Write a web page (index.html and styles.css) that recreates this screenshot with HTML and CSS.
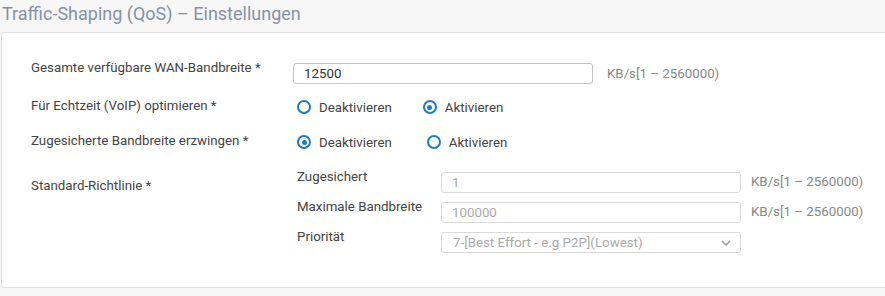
FILE: index.html
```html
<!DOCTYPE html>
<html lang="de">
<head>
<meta charset="utf-8">
<title>Traffic-Shaping (QoS) – Einstellungen</title>
<link rel="stylesheet" href="styles.css">
</head>
<body>
<h1 class="title">Traffic-Shaping (QoS) – Einstellungen</h1>
<section class="panel">
  <div class="row row-wan">
    <div class="label">Gesamte verfügbare WAN-Bandbreite *</div>
    <div class="field">
      <div class="input">12500</div>
      <span class="unit">KB/s[1 – 2560000)</span>
    </div>
  </div>
  <div class="row row-radio">
    <div class="label">Für Echtzeit (VoIP) optimieren *</div>
    <div class="radios">
      <span class="radio"><span class="dot"></span>Deaktivieren</span>
      <span class="radio"><span class="dot checked"></span>Aktivieren</span>
    </div>
  </div>
  <div class="row row-radio">
    <div class="label">Zugesicherte Bandbreite erzwingen *</div>
    <div class="radios wide">
      <span class="radio"><span class="dot checked"></span>Deaktivieren</span>
      <span class="radio"><span class="dot"></span>Aktivieren</span>
    </div>
  </div>
  <div class="row row-policy">
    <div class="label policy-label">Standard-Richtlinie *</div>
    <div class="subgrid">
      <div class="sublabel">Zugesichert</div>
      <div class="input disabled">1</div>
      <span class="unit">KB/s[1 – 2560000)</span>
      <div class="sublabel">Maximale Bandbreite</div>
      <div class="input disabled">100000</div>
      <span class="unit">KB/s[1 – 2560000)</span>
      <div class="sublabel">Priorität</div>
      <div class="input disabled select">7-[Best Effort - e.g P2P](Lowest)
        <svg class="chev" width="10" height="6" viewBox="0 0 10 6"><path d="M1 1l4 4 4-4" fill="none" stroke="#9aa0a6" stroke-width="1.6"/></svg>
      </div>
      <span></span>
    </div>
  </div>
</section>
</body>
</html>
```
FILE: styles.css
```css
* { box-sizing: border-box; }
html, body { margin: 0; padding: 0; }
body {
  background: #f7f7f7;
  font-family: Roboto, "Noto Sans", "Liberation Sans", sans-serif;
  font-size: 13.3px;
  color: #444;
  width: 885px;
  height: 296px;
  overflow: hidden;
}
.title {
  margin: 0;
  height: 32px;
  padding: 2px 0 0 2px;
  font-size: 18px;
  font-weight: 400;
  line-height: 24px;
  color: #8592a6;
}
.panel {
  margin-left: 1px;
  width: 900px;
  height: 256px;
  background: #fff;
  border: 1px solid #dcdcdc;
  border-radius: 3px;
  padding: 27px 0 0 29px;
}
.row {
  display: grid;
  grid-template-columns: 262px 1fr;
}
.label { line-height: 16px; }
.row-wan { height: 39px; }
.field { display: flex; align-items: center; height: 22px; margin-top: 2px; }
.input {
  width: 300px;
  height: 21px;
  border: 1px solid #c4c4c4;
  border-radius: 3px;
  padding: 0 10px;
  line-height: 19px;
  color: #333;
  background: #fff;
  position: relative;
}
.unit { color: #888; margin-left: 14px; white-space: nowrap; }
.row-radio { height: 35px; }
.row-radio .label { margin-top: -1px; }
.radios { display: flex; align-items: center; height: 16px; margin-top: 0; margin-left: 4px; }
.radio { display: flex; align-items: center; color: #444; margin-right: 31px; }
.radios.wide .radio:first-child { margin-right: 35px; }
.dot {
  width: 14px;
  height: 14px;
  border: 2px solid #1f7ac4;
  border-radius: 50%;
  margin-right: 8px;
  display: inline-flex;
  align-items: center;
  justify-content: center;
}
.dot.checked::after {
  content: "";
  width: 5px;
  height: 5px;
  border-radius: 50%;
  background: #1f7ac4;
}
.row-policy { grid-template-columns: 266px 1fr; padding-top: 3px; }
.policy-label { margin-top: 6px; }
.subgrid {
  display: grid;
  grid-template-columns: 144px 300px auto;
  row-gap: 9px;
  align-items: start;
}
.sublabel { line-height: 16px; margin-top: -3px; color: #444; }
.subgrid .unit { margin-left: 10px; line-height: 20px; }
.input.disabled {
  border-color: #dadada;
  color: #aaa;
}
.select { padding-left: 11px; }
.chev { position: absolute; right: 9px; top: 7px; }
```
